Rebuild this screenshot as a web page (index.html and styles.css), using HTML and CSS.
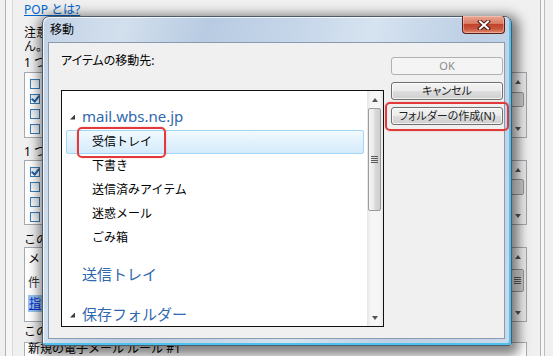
FILE: index.html
```html
<!DOCTYPE html>
<html lang="ja">
<head>
  <meta charset="UTF-8" />
  <title>移動</title>
  <link rel="stylesheet" href="styles.css">
</head>
<body>
  <div class="screen">
    <div class="back">
      <a class="link" href="#">POP とは?</a>
      <p class="note">注意</p>
      <p class="note2">ん。</p>
      <p class="cap cap1">1 つ</p>
      <div class="box box1">
        <ul class="rows">
          <li><span class="cb"></span></li>
          <li><span class="cb on"></span></li>
          <li><span class="cb"></span></li>
          <li><span class="cb"></span></li>
        </ul>
        <div class="sb">
          <span class="arr up"></span>
          <span class="thumb t1"></span>
          <span class="fill"></span>
          <span class="arr down"></span>
        </div>
      </div>
      <p class="cap cap2">1 つ</p>
      <div class="box box2">
        <ul class="rows">
          <li><span class="cb on"></span></li>
          <li><span class="cb"></span></li>
          <li><span class="cb"></span></li>
          <li><span class="cb"></span></li>
        </ul>
        <div class="sb">
          <span class="arr up"></span>
          <span class="thumb t2"></span>
          <span class="fill"></span>
          <span class="arr down"></span>
        </div>
      </div>
      <p class="cap cap3">この</p>
      <div class="box box3">
        <div class="desc">
          <p class="d1">メ</p>
          <p class="d2">件</p>
          <p class="d3"><a href="#">指</a></p>
        </div>
        <div class="sb">
          <span class="arr up"></span>
          <span class="thumb t3"><i class="grip"></i></span>
          <span class="fill"></span>
          <span class="arr down"></span>
        </div>
      </div>
      <p class="cap cap4">この</p>
      <div class="field">新規の電子メール ルール #1</div>
    </div>

    <div class="dialog">
      <div class="titlebar">
        <span class="title">移動</span>
        <span class="close">
          <svg width="14" height="10" viewBox="0 0 14 10">
            <path d="M3 1.5 L11 8.5 M11 1.5 L3 8.5" stroke="#4a1a14" stroke-width="4" stroke-linecap="square" fill="none"/>
            <path d="M3 1.5 L11 8.5 M11 1.5 L3 8.5" stroke="#fff" stroke-width="2" stroke-linecap="square" fill="none"/>
          </svg>
        </span>
      </div>
      <div class="client">
        <div class="pane">
          <div class="label">アイテムの移動先:</div>
          <div class="tree">
            <div class="items">
              <div class="node"><span class="tri"></span>mail.wbs.ne.jp</div>
              <div class="folder sel">受信トレイ<span class="mark"></span></div>
              <div class="folder">下書き</div>
              <div class="folder">送信済みアイテム</div>
              <div class="folder">迷惑メール</div>
              <div class="folder">ごみ箱</div>
              <div class="node outbox">送信トレイ</div>
              <div class="node saved"><span class="tri"></span>保存フォルダー</div>
            </div>
            <div class="sb tall">
              <span class="arr up"></span>
              <span class="thumb big"><i class="grip"></i></span>
              <span class="fill"></span>
              <span class="arr down"></span>
            </div>
          </div>
        </div>
        <div class="buttons">
          <span class="btn off">OK</span>
          <span class="btn">キャンセル</span>
          <span class="btn">フォルダーの作成(N)<span class="mark btn-mark"></span></span>
        </div>
      </div>
    </div>
  </div>
</body>
</html>
```

FILE: styles.css
```css
* { box-sizing: border-box; }
body {
  margin: 0;
  font-family: "Noto Sans", "Noto Sans CJK JP", sans-serif;
  font-size: 12px;
  line-height: 14px;
  color: #000;
  background: #f0f0f0;
}
p, ul { margin: 0; padding: 0; list-style: none; }
.screen {
  position: relative;
  width: 553px;
  height: 356px;
  overflow: hidden;
  background: #f0f0f0;
}

/* window behind the dialog */
.back {
  margin-left: 5px;
  width: 536px;
  height: 356px;
  padding: 3px 13px 0 18px;
  border-left: 1px solid #b3b3b3;
  border-right: 1px solid #b3b3b3;
  box-shadow: inset 6px 0 0 #f6f6f6, inset 7px 0 0 #d9d9d9, 3px 0 0 #f6f6f6, 4px 0 0 #bcbcbc;
  white-space: nowrap;
  overflow: hidden;
}
.link { display: block; color: #0066cc; text-decoration: underline; line-height: 14px; width: max-content; }
.note { margin-top: 9px; }
.cap1 { margin-top: 2px; }
.cap2 { margin-top: 7px; }
.cap3 { margin-top: 8px; }
.cap4 { margin-top: 3px; }
.box {
  display: flex;
  border: 1px solid #a5a9b0;
  background: #fff;
}
.box1 { margin-top: 2px; height: 66px; }
.box2 { margin-top: 1px; height: 65px; }
.box3 { margin-top: 0; height: 75px; }
.rows { flex: 1; padding: 3px 0 0 5px; }
.rows li { height: 15px; display: flex; align-items: center; gap: 6px; }
.cb {
  position: relative;
  width: 10px;
  height: 10px;
  border: 1px solid #3a7cb6;
  background: linear-gradient(#e6eef6, #fff);
}
.cb.on::after {
  content: "";
  position: absolute;
  left: 2px;
  top: -1px;
  width: 3px;
  height: 6px;
  border: solid #1f5fa6;
  border-width: 0 2px 2px 0;
  transform: rotate(40deg);
}
.desc { flex: 1; padding: 4px 0 0 3px; }
.d2 { margin-top: 10px; color: #333; }
.d3 { margin-top: 5px; height: 17px; line-height: 17px; background: #98c5ee; padding-left: 1px; }
.d3 a { color: #0a2bd8; }
.field {
  margin-top: 3px;
  height: 14px;
  border: 1px solid #abadb3;
  border-bottom: 0;
  background: #fff;
  padding-left: 3px;
  line-height: 12px;
}

/* scrollbars */
.sb {
  width: 16px;
  display: flex;
  flex-direction: column;
  background: linear-gradient(90deg, #e6e6e6, #f6f6f6 25%, #f6f6f6 75%, #e9e9e9);
}
.arr { height: 17px; display: flex; align-items: center; justify-content: center; }
.arr::before {
  content: "";
  border-left: 3px solid transparent;
  border-right: 3px solid transparent;
}
.arr.up::before { border-bottom: 4px solid #555; }
.arr.down::before { border-top: 4px solid #555; }
.fill { flex: 1; }
.thumb {
  margin: 0 2px 0 1px;
  border: 1px solid #9b9b9b;
  border-radius: 2px;
  background: linear-gradient(90deg, #f6f6f6, #e8e8e8 45%, #d9d9d9 55%, #cfcfcf);
  display: flex;
  align-items: center;
  justify-content: center;
}
.t1 { margin-top: 2px; height: 15px; }
.t2 { margin-top: 1px; height: 16px; }
.t3 { margin-top: 4px; height: 23px; }
.big { height: 103px; }
.grip {
  width: 7px;
  height: 7px;
  background: repeating-linear-gradient(#5a5a5a 0 1px, transparent 1px 2px);
}

/* dialog */
.dialog {
  position: absolute;
  left: 42px;
  top: 16px;
  width: 470px;
  height: 330px;
  padding: 0 6px 6px 5px;
  display: flex;
  flex-direction: column;
  border: 1px solid #4c5b6c;
  border-radius: 7px 7px 3px 3px;
  background: linear-gradient(105deg, #c3d3e6 0%, #d2dfed 15%, #b8cbe2 30%, #c6d6e9 46%, #d6e3f0 60%, #bccfe5 78%, #cbdaeb 100%);
  box-shadow: inset -2px -2px 0 #4fc2ee, inset 1px 1px 0 rgba(255,255,255,.75), 2px 4px 12px 5px rgba(0,0,0,.5);
}
.titlebar {
  height: 25px;
  display: flex;
  align-items: center;
  padding-left: 2px;
}
.title { font-size: 12px; line-height: 14px; }
.close {
  margin-left: auto;
  align-self: flex-start;
  margin-top: -1px;
  width: 43px;
  height: 18px;
  display: flex;
  align-items: center;
  justify-content: center;
  border: 1px solid #5b1f1a;
  border-top: 0;
  border-radius: 0 4px 4px 4px;
  background: linear-gradient(#e9a793 0%, #d97a62 45%, #c2432c 50%, #c8553c 75%, #e08a6c 100%);
  box-shadow: inset 0 0 0 1px rgba(255,220,210,.45);
}
.client {
  flex: 1;
  display: flex;
  gap: 7px;
  padding: 11px 1px 0 12px;
  border: 1px solid #8a9bb0;
  background: #f0f0f0;
}
.pane { width: 323px; }
.label { line-height: 14px; font-feature-settings: "palt" 1; }
.tree {
  margin-top: 22px;
  height: 237px;
  display: flex;
  border: 1px solid #111;
  background: #fff;
}
.items {
  flex: 1;
  padding-top: 13px;
  overflow: hidden;
}
.node {
  height: 24px;
  display: flex;
  align-items: center;
  padding-left: 8px;
  color: #2f68ae;
  font-size: 15px;
  line-height: 18px;
}
.node:first-child { margin-bottom: 2px; }
.tri {
  width: 5px;
  height: 5px;
  margin-right: 7px;
  margin-top: 2px;
  background: #3d3d3d;
  clip-path: polygon(100% 0, 100% 100%, 0 100%);
}
.outbox { margin-top: 12px; padding-left: 20px; }
.saved { margin-top: 16px; }
.folder {
  position: relative;
  height: 24px;
  display: flex;
  align-items: center;
  padding-left: 30px;
}
.folder.sel {
  margin: 0 3px 0 4px;
  padding-left: 25px;
  border: 1px solid #a3d6f7;
  border-radius: 2px;
  background: linear-gradient(#f1f9fe, #e2f2fd 50%, #d5ebfb);
}
.mark {
  position: absolute;
  left: 10px;
  top: -4px;
  width: 89px;
  height: 31px;
  border: 2px solid #e2393a;
  border-radius: 5px;
  box-shadow: 0 0 2px rgba(226, 57, 58, .35);
}
.buttons {
  width: 112px;
  padding-top: 3px;
  display: flex;
  flex-direction: column;
  gap: 7px;
}
.btn {
  position: relative;
  height: 18px;
  border: 1px solid #707070;
  border-radius: 3px;
  background: linear-gradient(#f3f3f3 0%, #ebebeb 50%, #dedede 50%, #cfcfcf 100%);
  box-shadow: inset 0 0 0 1px rgba(255,255,255,.7);
  text-align: center;
  font-size: 11px;
  line-height: 16px;
  color: #222;
  font-feature-settings: "palt" 1;
}
.btn.off {
  border-color: #adb2b5;
  background: #f4f4f4;
  color: #8a8a8a;
  box-shadow: none;
}
.btn-mark {
  left: -7px;
  top: -6px;
  width: 124px;
  height: 29px;
}
```
